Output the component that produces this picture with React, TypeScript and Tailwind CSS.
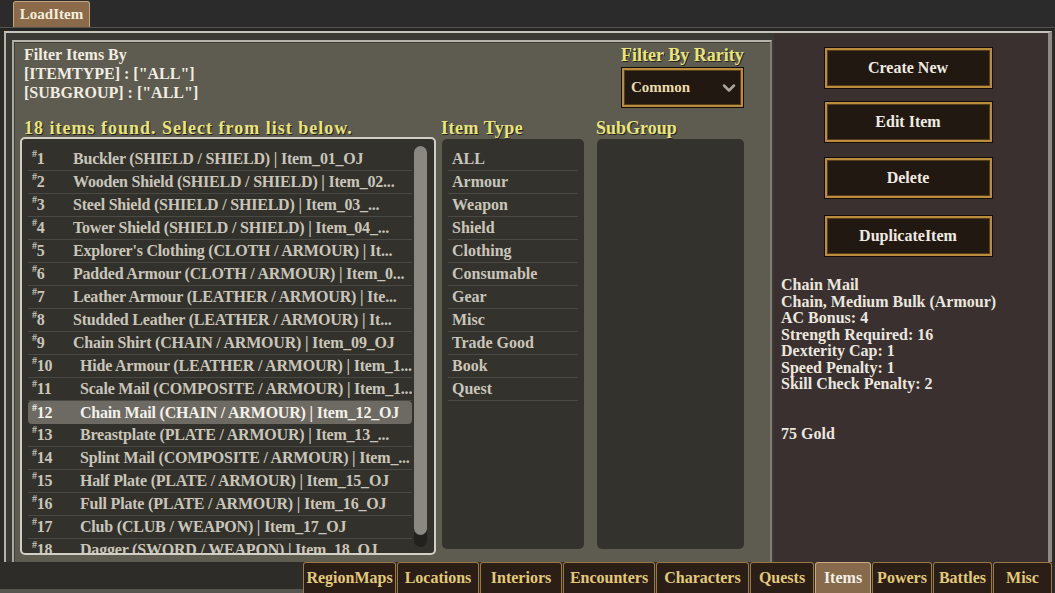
import { ChevronDown } from "lucide-react";

const items = [
  "Buckler (SHIELD / SHIELD) | Item_01_OJ",
  "Wooden Shield (SHIELD / SHIELD) | Item_02...",
  "Steel Shield (SHIELD / SHIELD) | Item_03_...",
  "Tower Shield (SHIELD / SHIELD) | Item_04_...",
  "Explorer's Clothing (CLOTH / ARMOUR) | It...",
  "Padded Armour (CLOTH / ARMOUR) | Item_0...",
  "Leather Armour (LEATHER / ARMOUR) | Ite...",
  "Studded Leather (LEATHER / ARMOUR) | It...",
  "Chain Shirt (CHAIN / ARMOUR) | Item_09_OJ",
  "Hide Armour (LEATHER / ARMOUR) | Item_1...",
  "Scale Mail (COMPOSITE / ARMOUR) | Item_1...",
  "Chain Mail (CHAIN / ARMOUR) | Item_12_OJ",
  "Breastplate (PLATE / ARMOUR) | Item_13_...",
  "Splint Mail (COMPOSITE / ARMOUR) | Item_...",
  "Half Plate (PLATE / ARMOUR) | Item_15_OJ",
  "Full Plate (PLATE / ARMOUR) | Item_16_OJ",
  "Club (CLUB / WEAPON) | Item_17_OJ",
  "Dagger (SWORD / WEAPON) | Item_18_OJ",
];

const itemTypes = [
  "ALL",
  "Armour",
  "Weapon",
  "Shield",
  "Clothing",
  "Consumable",
  "Gear",
  "Misc",
  "Trade Good",
  "Book",
  "Quest",
];

const tabs = [
  { name: "RegionMaps", w: "w-[93px]" },
  { name: "Locations", w: "w-[82px]" },
  { name: "Interiors", w: "w-[82px]" },
  { name: "Encounters", w: "w-[92px]" },
  { name: "Characters", w: "w-[93px]" },
  { name: "Quests", w: "w-[64px]" },
  { name: "Items", w: "w-[56px]", active: true },
  { name: "Powers", w: "w-[60px]" },
  { name: "Battles", w: "w-[59px]" },
  { name: "Misc", w: "w-[59px]" },
];

const details = [
  "Chain Mail",
  "Chain, Medium Bulk (Armour)",
  "AC Bonus: 4",
  "Strength Required: 16",
  "Dexterity Cap: 1",
  "Speed Penalty: 1",
  "Skill Check Penalty: 2",
  "\u00a0",
  "\u00a0",
  "75 Gold",
];

function GoldBox({ children, className }: { children: React.ReactNode; className: string }) {
  return (
    <div className={`border border-[#140d08] bg-[#140d08] ${className}`}>
      <div className="h-full border-2 border-[#b98c3e] bg-[#221812] shadow-[inset_0_0_0_1px_#5a3d1c]">
        {children}
      </div>
    </div>
  );
}

function Heading({ children, className = "" }: { children: React.ReactNode; className?: string }) {
  return (
    <div className={`text-[18px] leading-[20px] font-bold text-[#e9e47d] [text-shadow:1px_1px_0_#25231c] ${className}`}>
      {children}
    </div>
  );
}

export default function App() {
  return (
    <div className="w-[1055px] h-[593px] overflow-hidden flex flex-col bg-[#2b2a27] font-['Liberation_Serif',serif] font-bold">
      {/* top tab bar */}
      <div className="h-[28px] bg-[#2b2b2b] flex items-end pl-[13px]">
        <div className="w-[77px] h-[26px] rounded-t-[3px] border border-b-0 border-[#c4a67e] bg-[#8a6a48] flex items-center justify-center text-[15px] text-[#f6eddc]">
          LoadItem
        </div>
      </div>
      <div className="h-[1px] bg-[#55544f]" />
      <div className="h-[3px] bg-[#252523]" />

      {/* main frame */}
      <div className="ml-[4px] w-[1048px] h-[531px] border-t-2 border-l-2 border-r-[4px] border-t-[#c6c4ba] border-l-[#b5b3a9] border-r-[#8d8b83] bg-[#3a3030] flex">
        <div className="bg-[#3a3935] pt-[7px] pl-[6px] pr-[2px] w-[768px]">
          <div className="h-[523px] border-t-2 border-l-2 border-r-2 border-t-[#b7b5ab] border-l-[#a9a79d] border-r-[#807e76] bg-[#5e5b50] shadow-[inset_1px_1px_0_#3f3d36] pl-[6px] pt-[3px]">
            {/* header row */}
            <div className="flex h-[60px]">
              <div className="flex-1 pl-[4px] text-[16px] leading-[19px] text-[#f1ede2]">
                <div>Filter Items By</div>
                <div>[ITEMTYPE] : ["ALL"]</div>
                <div>[SUBGROUP] : ["ALL"]</div>
              </div>
              <div className="w-[150px] pl-[1px]">
                <Heading>Filter By Rarity</Heading>
                <GoldBox className="mt-[2px] w-[123px] h-[41px]">
                  <div className="h-full flex items-center justify-between pl-[7px] pr-[2px] text-[15px] text-[#e6dcae]">
                    <span>Common</span>
                    <ChevronDown size={20} strokeWidth={3} className="text-[#aaa69c]" />
                  </div>
                </GoldBox>
              </div>
            </div>

            {/* headings */}
            <div className="flex mt-[13px] h-[18px]">
              <Heading className="w-[421px] pl-[4px] tracking-[1px]">18 items found. Select from list below.</Heading>
              <Heading className="w-[155px] tracking-[0.5px]">Item Type</Heading>
              <Heading>SubGroup</Heading>
            </div>

            {/* lists */}
            <div className="flex mt-[1px] items-start">
              <div className="w-[416px] h-[418px] rounded-[5px] border-2 border-[#d2d0c6] bg-[#33312b] flex overflow-hidden pl-[6px] pt-[7px] pr-[8px]">
                <div className="w-[384px] flex flex-col pt-[2px]">
                  {items.map((text, i) => {
                    const n = i + 1;
                    const sel = n === 12;
                    return (
                      <div
                        key={n}
                        className={`h-[23px] shrink-0 flex items-center whitespace-nowrap overflow-hidden text-[16px] tracking-[-0.2px] ${
                          sel
                            ? "bg-[#6d6a63] rounded-[4px] text-[#f4f1ea]"
                            : "border-b border-[#4b4943] text-[#c9c5ba]"
                        }`}
                      >
                        <span className="pl-[4px] w-[45px] shrink-0 flex items-start">
                          <span className="text-[10px] leading-[10px] mt-[-2px]">#</span>
                          <span className="leading-[16px]">{n}</span>
                        </span>
                        <span className={n >= 10 ? "pl-[7px]" : ""}>{text}</span>
                      </div>
                    );
                  })}
                </div>
                <div className="ml-[2px] w-[13px] h-[401px] rounded-full bg-[#22211d] shrink-0">
                  <div className="w-[13px] h-[389px] rounded-full bg-[#8b8881]" />
                </div>
              </div>

              <div className="ml-[6px] mt-[2px] w-[142px] h-[410px] rounded-[5px] bg-[#34322c] pt-[9px] px-[6px]">
                {itemTypes.map((t) => (
                  <div
                    key={t}
                    className="h-[23px] flex items-center border-b border-[#4b4943] pl-[4px] text-[16px] text-[#c9c5ba]"
                  >
                    {t}
                  </div>
                ))}
              </div>

              <div className="ml-[13px] mt-[2px] w-[147px] h-[410px] rounded-[5px] bg-[#34322c]" />
            </div>
          </div>
        </div>

        {/* right panel */}
        <div className="flex-1 flex flex-col">
          <div className="flex flex-col items-center pt-[14px] pr-[6px]">
            <GoldBox className="w-[169px] h-[42px]">
              <div className="h-full flex items-center justify-center text-[16px] text-[#efebe2]">Create New</div>
            </GoldBox>
            <GoldBox className="mt-[12px] w-[169px] h-[42px]">
              <div className="h-full flex items-center justify-center text-[16px] text-[#efebe2]">Edit Item</div>
            </GoldBox>
            <GoldBox className="mt-[14px] w-[169px] h-[42px]">
              <div className="h-full flex items-center justify-center text-[16px] text-[#efebe2]">Delete</div>
            </GoldBox>
            <GoldBox className="mt-[16px] w-[169px] h-[42px]">
              <div className="h-full flex items-center justify-center text-[16px] text-[#efebe2]">DuplicateItem</div>
            </GoldBox>
          </div>
          <div className="mt-[20px] pl-[7px] text-[16px] leading-[16.5px] text-[#ebe7df]">
            {details.map((d, i) => (
              <div key={i}>{d}</div>
            ))}
          </div>
        </div>
      </div>

      {/* bottom tabs */}
      <div className="flex-1 flex">
        <div className="w-[303px] flex flex-col justify-end bg-[#2d2c28]">
          <div className="h-[4px] bg-[#55544e]" />
        </div>
        <div className="flex items-end gap-[1px] bg-[#2d2c28]">
          {tabs.map((t) => (
            <div
              key={t.name}
              className={`${t.w} h-[31px] rounded-t-[3px] border border-b-0 flex items-center justify-center text-[16px] ${
                t.active
                  ? "bg-[#87694b] border-[#c9ab80] text-[#f4efe6]"
                  : "bg-[#2a1e17] border-[#9a7843] text-[#e3c97a]"
              }`}
            >
              {t.name}
            </div>
          ))}
        </div>
      </div>
    </div>
  );
}
